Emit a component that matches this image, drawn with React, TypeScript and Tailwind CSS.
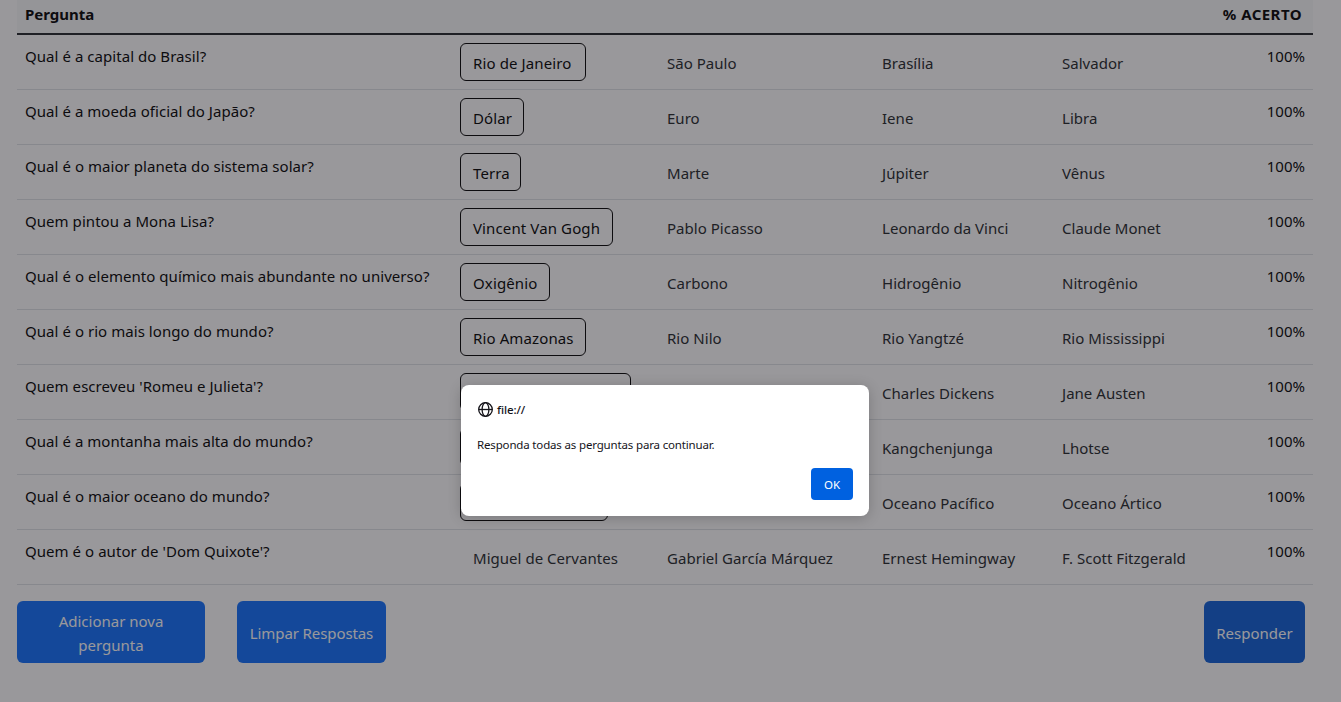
type Row = { q: string; options: string[]; width?: string };

const rows: Row[] = [
  { q: "Qual é a capital do Brasil?", options: ["Rio de Janeiro", "São Paulo", "Brasília", "Salvador"], width: "w-[126px]" },
  { q: "Qual é a moeda oficial do Japão?", options: ["Dólar", "Euro", "Iene", "Libra"], width: "w-[64px]" },
  { q: "Qual é o maior planeta do sistema solar?", options: ["Terra", "Marte", "Júpiter", "Vênus"], width: "w-[61px]" },
  { q: "Quem pintou a Mona Lisa?", options: ["Vincent Van Gogh", "Pablo Picasso", "Leonardo da Vinci", "Claude Monet"], width: "w-[153px]" },
  { q: "Qual é o elemento químico mais abundante no universo?", options: ["Oxigênio", "Carbono", "Hidrogênio", "Nitrogênio"], width: "w-[90px]" },
  { q: "Qual é o rio mais longo do mundo?", options: ["Rio Amazonas", "Rio Nilo", "Rio Yangtzé", "Rio Mississippi"], width: "w-[126px]" },
  { q: "Quem escreveu 'Romeu e Julieta'?", options: ["", "", "Charles Dickens", "Jane Austen"], width: "w-[171px]" },
  { q: "Qual é a montanha mais alta do mundo?", options: ["", "", "Kangchenjunga", "Lhotse"], width: "w-[126px]" },
  { q: "Qual é o maior oceano do mundo?", options: ["", "", "Oceano Pacífico", "Oceano Ártico"], width: "w-[148px]" },
  { q: "Quem é o autor de 'Dom Quixote'?", options: ["Miguel de Cervantes", "Gabriel García Márquez", "Ernest Hemingway", "F. Scott Fitzgerald"] },
];

function QuestionRow({ row }: { row: Row }) {
  return (
    <div className="grid h-[55px] grid-cols-[435px_194px_215px_180px_1fr] border-b border-[#dee2e6] py-2 pl-2 text-black">
      <div className="leading-[26px] tracking-[0.05px]">{row.q}</div>
      {row.options.map((option, i) => (
        <div
          key={i}
          className={
            i === 0 && row.width
              ? `flex h-[38px] items-center rounded-md border border-black pl-3 pt-[3px] tracking-[0.12px] ${row.width}`
              : "flex h-[38px] items-center border border-transparent pl-3 pt-[3px] tracking-[0.03px] text-[#212529]"
          }
        >
          {option}
        </div>
      ))}
    </div>
  );
}

function Globe() {
  return (
    <svg className="size-[15px]" viewBox="0 0 15 15" fill="none" stroke="#15141a" strokeWidth="1.3">
      <circle cx="7.5" cy="7.5" r="6.8" />
      <ellipse cx="7.5" cy="7.5" rx="3.4" ry="6.8" />
      <path d="M0.7 7.5h13.6" />
    </svg>
  );
}

export default function App() {
  return (
    <div className="relative h-[702px] w-[1341px] overflow-hidden bg-white font-['Noto_Sans',sans-serif] text-[15px] whitespace-nowrap">
      <main className="pr-7 pl-[17px]">
        <div className="flex h-[35px] justify-between border-b-2 border-[#212529] bg-[#f8f9fa] pt-[2px] pr-[11px] pl-2 leading-6 font-bold text-black">
          <span>Pergunta</span>
          <span className="tracking-[0.45px]">% ACERTO</span>
        </div>
        <div className="flex">
          <div className="w-[1212px]">
            {rows.map((row) => (
              <QuestionRow key={row.q} row={row} />
            ))}
          </div>
          <div className="flex-1">
            {rows.map((row) => (
              <div key={row.q} className="h-[55px] border-b border-[#dee2e6] py-2 pr-2 text-right leading-[26px] text-black">
                100%
              </div>
            ))}
          </div>
        </div>
        <div className="flex h-[78px] gap-8 pt-4 pr-2 text-white">
          <button className="w-[188px] rounded-md bg-[#0d6efd] pt-[2px] leading-6">
            Adicionar nova
            <br />
            pergunta
          </button>
          <button className="w-[149px] rounded-md bg-[#0d6efd] pt-[3px] tracking-[-0.1px]">Limpar Respostas</button>
          <button className="ml-auto w-[101px] rounded-md bg-[#0b5ed7] pt-[3px]">Responder</button>
        </div>
      </main>
      <div className="absolute inset-0 bg-[rgba(28,27,34,0.45)]" />
      <div
        role="dialog"
        className="absolute top-[385px] left-[461px] flex h-[131px] w-[408px] flex-col rounded-lg bg-white p-4 text-[11.5px] text-[#15141a] shadow-[0_2px_14px_rgba(0,0,0,0.2)]"
      >
        <div className="flex h-[17px] items-center gap-1 pl-px">
          <Globe />
          <span className="pt-px font-medium tracking-[-0.1px]">file://</span>
        </div>
        <p className="mt-[19px] leading-4 tracking-[-0.16px]">Responda todas as perguntas para continuar.</p>
        <button className="mt-auto ml-auto h-8 w-[42px] rounded bg-[#0061e0] pt-px text-white">OK</button>
      </div>
    </div>
  );
}
